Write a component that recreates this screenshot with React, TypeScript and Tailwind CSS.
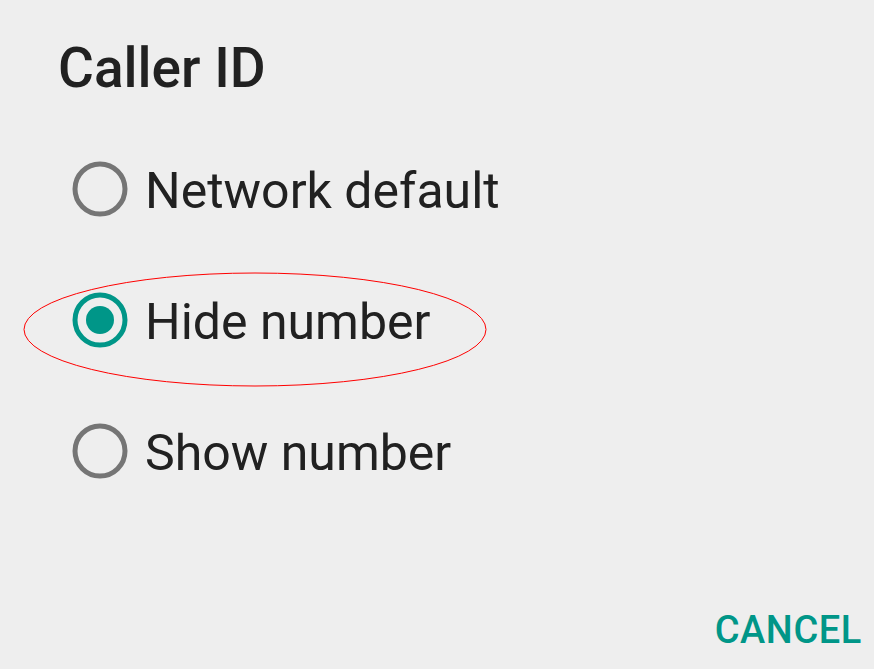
import React from "react";

function Radio({ checked }: { checked: boolean }) {
  return (
    <svg width="56" height="56" viewBox="0 0 56 56" className="shrink-0">
      <circle
        cx="28"
        cy="28"
        r="25"
        fill="none"
        stroke={checked ? "#009688" : "#757575"}
        strokeWidth="5"
      />
      {checked && <circle cx="28" cy="28" r="14" fill="#009688" />}
    </svg>
  );
}

export default function App() {
  const items = [
    { label: "Network default", checked: false },
    { label: "Hide number", checked: true },
    { label: "Show number", checked: false },
  ];
  return (
    <div
      className="relative w-[874px] h-[669px] bg-[#eeeeee] flex flex-col overflow-hidden"
      style={{ fontFamily: "Roboto, 'Noto Sans', sans-serif" }}
    >
      <h1 className="pl-[58px] pt-[41px] text-[55px] leading-[55px] font-medium text-[#212121]">
        Caller ID
      </h1>
      <div className="flex flex-col pt-[27px]">
        {items.map((it) => (
          <div key={it.label} className="h-[131px] flex items-center pl-[72px] gap-[17px]">
            <Radio checked={it.checked} />
            <span className="mt-[4px] text-[50px] leading-[50px] text-[#212121]">{it.label}</span>
          </div>
        ))}
      </div>
      <div className="flex-1" />
      <div className="flex justify-end pr-[12px] pb-[20px]">
        <span className="text-[38px] leading-[38px] tracking-[0.6px] font-medium text-[#009688]">CANCEL</span>
      </div>
      <svg
        className="absolute left-0 top-0 pointer-events-none"
        width="874"
        height="669"
      >
        <ellipse cx="255" cy="329.5" rx="231" ry="56.5" fill="none" stroke="#ff0000" strokeWidth="1" />
      </svg>
    </div>
  );
}
